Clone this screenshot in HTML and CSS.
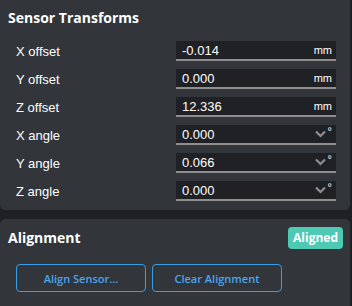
FILE: index.html
```html
<!DOCTYPE html>
<html>
<head>
<meta charset="utf-8">
<link rel="stylesheet" href="styles.css">
</head>
<body>
<section class="panel panel-top">
  <h2 class="title">Sensor Transforms</h2>
  <div class="rows">
    <div class="row"><span class="label">X offset</span><div class="field"><span class="val">-0.014</span><span class="unit">mm</span></div></div>
    <div class="row"><span class="label">Y offset</span><div class="field"><span class="val">0.000</span><span class="unit">mm</span></div></div>
    <div class="row"><span class="label">Z offset</span><div class="field"><span class="val">12.336</span><span class="unit">mm</span></div></div>
    <div class="row"><span class="label">X angle</span><div class="field"><span class="val">0.000</span><span class="suffix"><svg class="chev" width="11" height="8" viewBox="0 0 11 8"><path d="M1 1.5 L5.5 6 L10 1.5" fill="none" stroke="#8e8e8e" stroke-width="2.2"/></svg><span class="deg">°</span></span></div></div>
    <div class="row"><span class="label">Y angle</span><div class="field"><span class="val">0.066</span><span class="suffix"><svg class="chev" width="11" height="8" viewBox="0 0 11 8"><path d="M1 1.5 L5.5 6 L10 1.5" fill="none" stroke="#8e8e8e" stroke-width="2.2"/></svg><span class="deg">°</span></span></div></div>
    <div class="row"><span class="label">Z angle</span><div class="field"><span class="val">0.000</span><span class="suffix"><svg class="chev" width="11" height="8" viewBox="0 0 11 8"><path d="M1 1.5 L5.5 6 L10 1.5" fill="none" stroke="#8e8e8e" stroke-width="2.2"/></svg><span class="deg">°</span></span></div></div>
  </div>
</section>
<section class="panel panel-bottom">
  <div class="head">
    <h2 class="title">Alignment</h2>
    <span class="badge">Aligned</span>
  </div>
  <div class="buttons">
    <button class="btn">Align Sensor...</button>
    <button class="btn">Clear Alignment</button>
  </div>
</section>
</body>
</html>
```
FILE: styles.css
```css
html, body {
  margin: 0;
  padding: 0;
  background: #1f2023;
}
body {
  width: 352px;
  height: 306px;
  overflow: hidden;
}
.panel {
  width: 350px;
  background: #32353a;
  box-sizing: border-box;
}
.panel-top {
  border-radius: 0 0 5px 5px;
  height: 210px;
  padding: 8px 0 0 0;
}
.panel-bottom {
  margin-top: 9px;
  border-radius: 5px 5px 0 0;
  height: 100px;
  padding: 8px 0 0 0;
}
.title {
  margin: 0;
  padding-left: 8px;
  font-family: "Open Sans", sans-serif;
  font-weight: 700;
  font-size: 14px;
  line-height: 20px;
  color: #ffffff;
}
.rows {
  margin-top: 13px;
  display: flex;
  flex-direction: column;
  gap: 8px;
}
.row {
  display: flex;
  align-items: center;
  height: 20px;
}
.label {
  width: 176px;
  padding-left: 16px;
  box-sizing: border-box;
  font-family: "Liberation Sans", Arial, sans-serif;
  font-size: 13px;
  color: #ffffff;
}
.field {
  width: 160px;
  height: 20px;
  box-sizing: border-box;
  background: #202125;
  border-bottom: 2px solid #8e8e8e;
  display: flex;
  align-items: center;
  justify-content: space-between;
  padding: 0 4px 0 6px;
  font-family: "Liberation Sans", Arial, sans-serif;
  color: #ffffff;
}
.val {
  font-size: 13px;
}
.unit {
  font-size: 11px;
}
.suffix {
  display: flex;
  align-items: center;
  gap: 2px;
}
.chev {
  display: block;
}
.deg {
  font-size: 11px;
  margin-top: -6px;
}
.head {
  display: flex;
  justify-content: space-between;
  align-items: center;
  padding-right: 7px;
}
.badge {
  background: #4ec9b4;
  color: #ffffff;
  font-family: "Open Sans", sans-serif;
  font-weight: 700;
  font-size: 12px;
  line-height: 22px;
  padding: 0 5px;
  border-radius: 4px;
}
.buttons {
  display: flex;
  gap: 6px;
  padding-left: 16px;
  margin-top: 15px;
}
.btn {
  width: 130px;
  height: 28px;
  box-sizing: border-box;
  background: transparent;
  border: 1px solid #3b9de6;
  border-radius: 4px;
  color: #4aa6f0;
  font-family: "Open Sans", sans-serif;
  font-weight: 600;
  font-size: 11px;
  padding: 0;
}
```
